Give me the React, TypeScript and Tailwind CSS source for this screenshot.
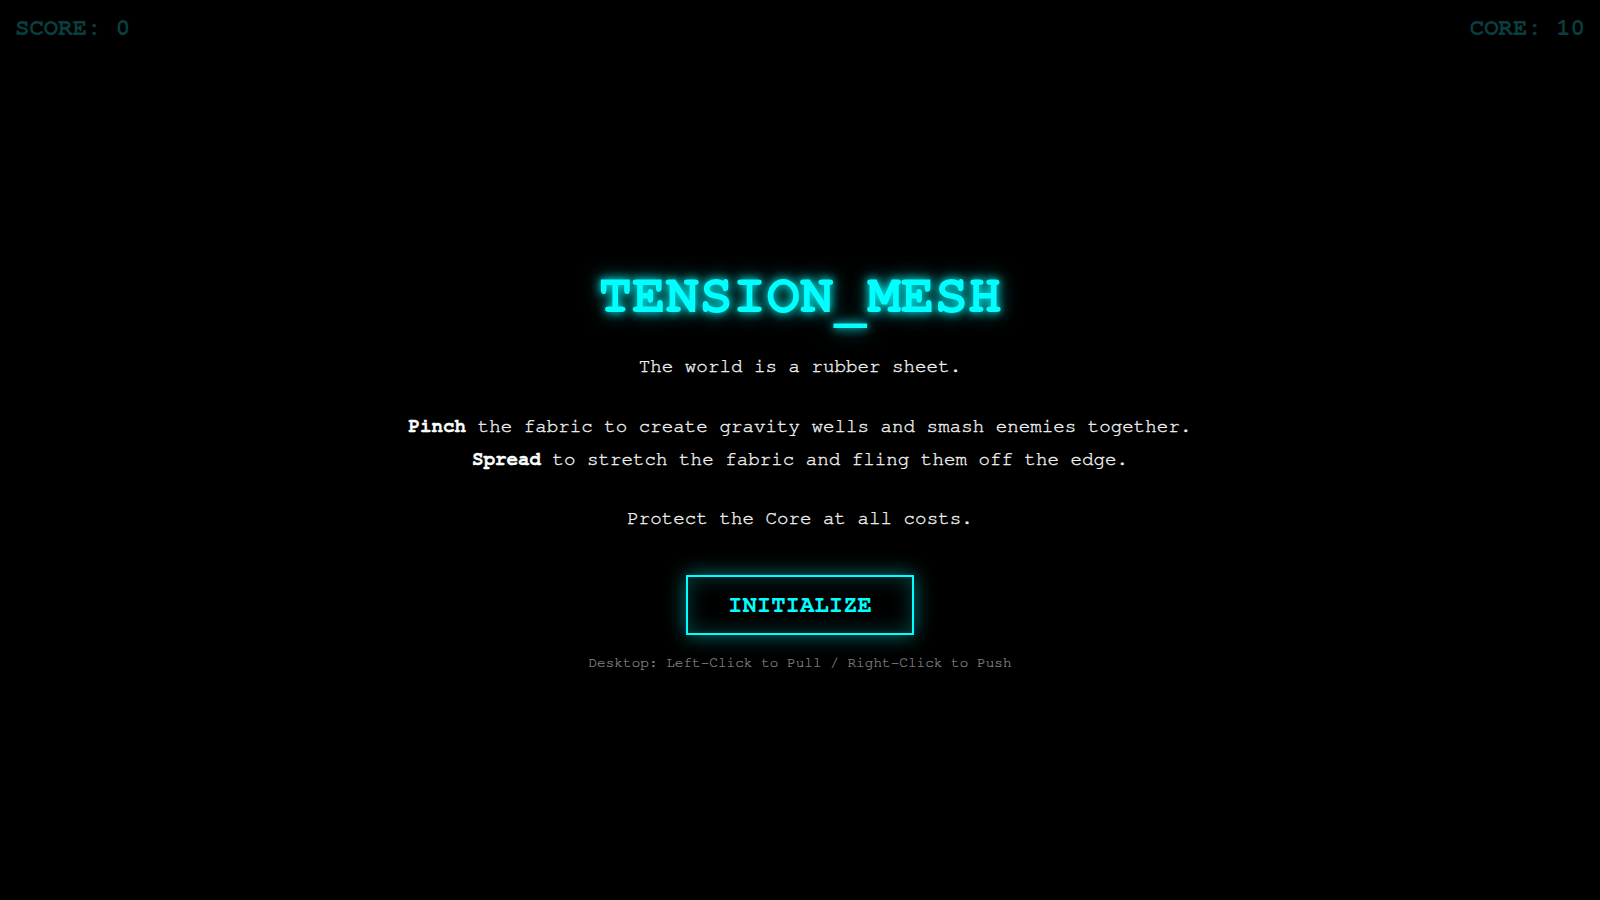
export default function App() {
  const mono = {
    fontFamily: '"Nimbus Mono PS", "Nimbus Mono L", FreeMono, Courier, "Courier New", "Liberation Mono", monospace',
  };
  return (
    <div className="relative h-screen w-full overflow-hidden bg-black text-[#f0f0f0]" style={mono}>
      {/* HUD */}
      <div className="absolute left-0 right-0 top-0 flex justify-between px-[15px] pt-[13px] text-[24px] font-bold leading-[30px] text-[#0a3e3e]">
        <span>SCORE: 0</span>
        <span>CORE: 10</span>
      </div>

      {/* Start overlay */}
      <div className="flex h-full flex-col items-center justify-center pt-[36px] text-center [-webkit-text-stroke:0.35px_currentColor]">
        <h1 className="mb-[24px] text-[56px] font-bold leading-[64px] text-[#00ffff] [-webkit-text-stroke:0px] [text-shadow:0_0_10px_#00ffff,0_0_20px_rgba(0,255,255,0.6)]">
          TENSION<span className="relative top-[6px]">_</span>MESH
        </h1>
        <p className="text-[19.2px] leading-[32.6px]">The world is a rubber sheet.</p>
        <p className="mt-[27px] text-[19.2px] leading-[32.6px]">
          <b className="text-white">Pinch</b> the fabric to create gravity wells and smash enemies together.
          <br />
          <b className="text-white">Spread</b> to stretch the fabric and fling them off the edge.
        </p>
        <p className="mt-[27px] text-[19.2px] leading-[32.6px]">Protect the Core at all costs.</p>
        <button className="mt-[39px] border-2 border-[#00ffff] bg-transparent px-[40px] py-[15px] text-[24px] font-bold leading-[26px] text-[#00ffff] [-webkit-text-stroke:0px] shadow-[0_0_20px_rgba(0,255,255,0.45),inset_0_0_20px_rgba(0,255,255,0.25)]">
          INITIALIZE
        </button>
        <p className="mt-[18px] text-[14.4px] leading-[20px] text-[#8a8a8a] [-webkit-text-stroke:0.2px_currentColor]">
          Desktop: Left-Click to Pull / Right-Click to Push
        </p>
      </div>
    </div>
  );
}
